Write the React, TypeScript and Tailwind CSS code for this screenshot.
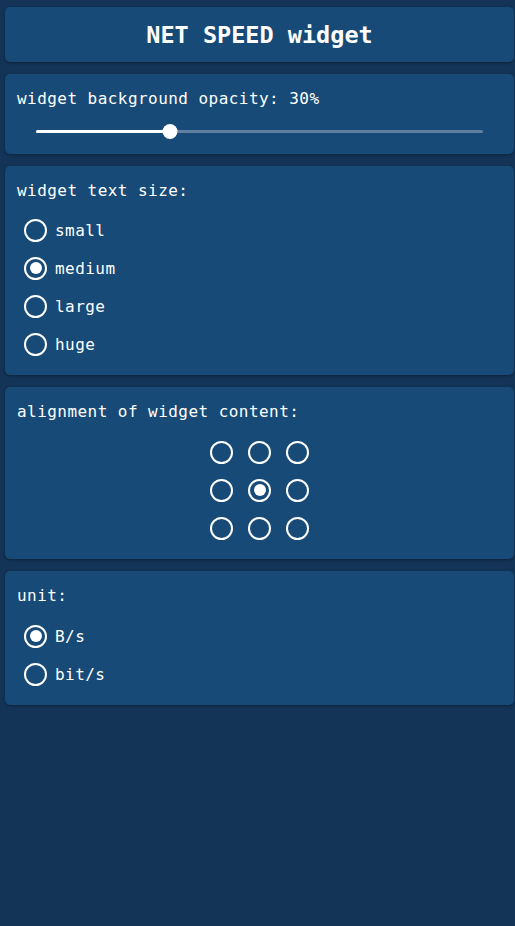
import React from "react";

const font = { fontFamily: '"DejaVu Sans Mono", "Liberation Mono", monospace' };

function Radio({ checked }: { checked?: boolean }) {
  return (
    <span className="w-[23px] h-[23px] rounded-full border-[2.5px] border-white flex items-center justify-center shrink-0">
      {checked && <span className="w-[12px] h-[12px] rounded-full bg-white" />}
    </span>
  );
}

function RadioRow({ label, checked }: { label: string; checked?: boolean }) {
  return (
    <div className="h-[38px] flex items-center pl-[7px] gap-[8px]">
      <Radio checked={checked} />
      <span className="pt-[1px] text-[16px] leading-[24px] tracking-[0.45px] text-white">{label}</span>
    </div>
  );
}

function Card({ children, className = "" }: { children: React.ReactNode; className?: string }) {
  return (
    <div
      className={
        "bg-[#174a77] rounded-[5px] shadow-[0_1px_3px_rgba(0,0,0,0.35)] ml-[5px] mr-[1px] p-[12px] " +
        className
      }
    >
      {children}
    </div>
  );
}

function Heading({ children }: { children: React.ReactNode }) {
  return <div className="pt-[1px] text-[16px] leading-[24px] tracking-[0.45px]">{children}</div>;
}

export default function App() {
  return (
    <div className="min-h-[926px] bg-[#133457] pt-[7px] flex flex-col gap-[12px] text-white" style={font}>
      <Card className="pt-[13px] pb-[11px]">
        <div className="text-center text-[23.5px] leading-[31px] font-bold">NET SPEED widget</div>
      </Card>
      <Card>
        <Heading>widget background opacity: 30%</Heading>
        <div className="mt-[9px] h-[22px] mx-[19px] relative flex items-center">
          <div className="h-[3px] w-full bg-white/30 rounded-full" />
          <div className="absolute left-0 h-[3px] bg-white rounded-full" style={{ width: "30%" }} />
          <div
            className="absolute w-[15px] h-[15px] rounded-full bg-white -translate-x-1/2"
            style={{ left: "30%" }}
          />
        </div>
      </Card>
      <Card>
        <Heading>widget text size:</Heading>
        <div className="mt-[8px] flex flex-col">
          <RadioRow label="small" />
          <RadioRow label="medium" checked />
          <RadioRow label="large" />
          <RadioRow label="huge" />
        </div>
      </Card>
      <Card>
        <Heading>alignment of widget content:</Heading>
        <div className="mt-[9px] flex justify-center">
          <div className="grid grid-cols-[38px_38px_38px] grid-rows-[38px_38px_38px]">
            {Array.from({ length: 9 }).map((_, i) => (
              <div key={i} className="flex items-center justify-center">
                <Radio checked={i === 4} />
              </div>
            ))}
          </div>
        </div>
      </Card>
      <Card>
        <Heading>unit:</Heading>
        <div className="mt-[9px] flex flex-col">
          <RadioRow label="B/s" checked />
          <RadioRow label="bit/s" />
        </div>
      </Card>
    </div>
  );
}
